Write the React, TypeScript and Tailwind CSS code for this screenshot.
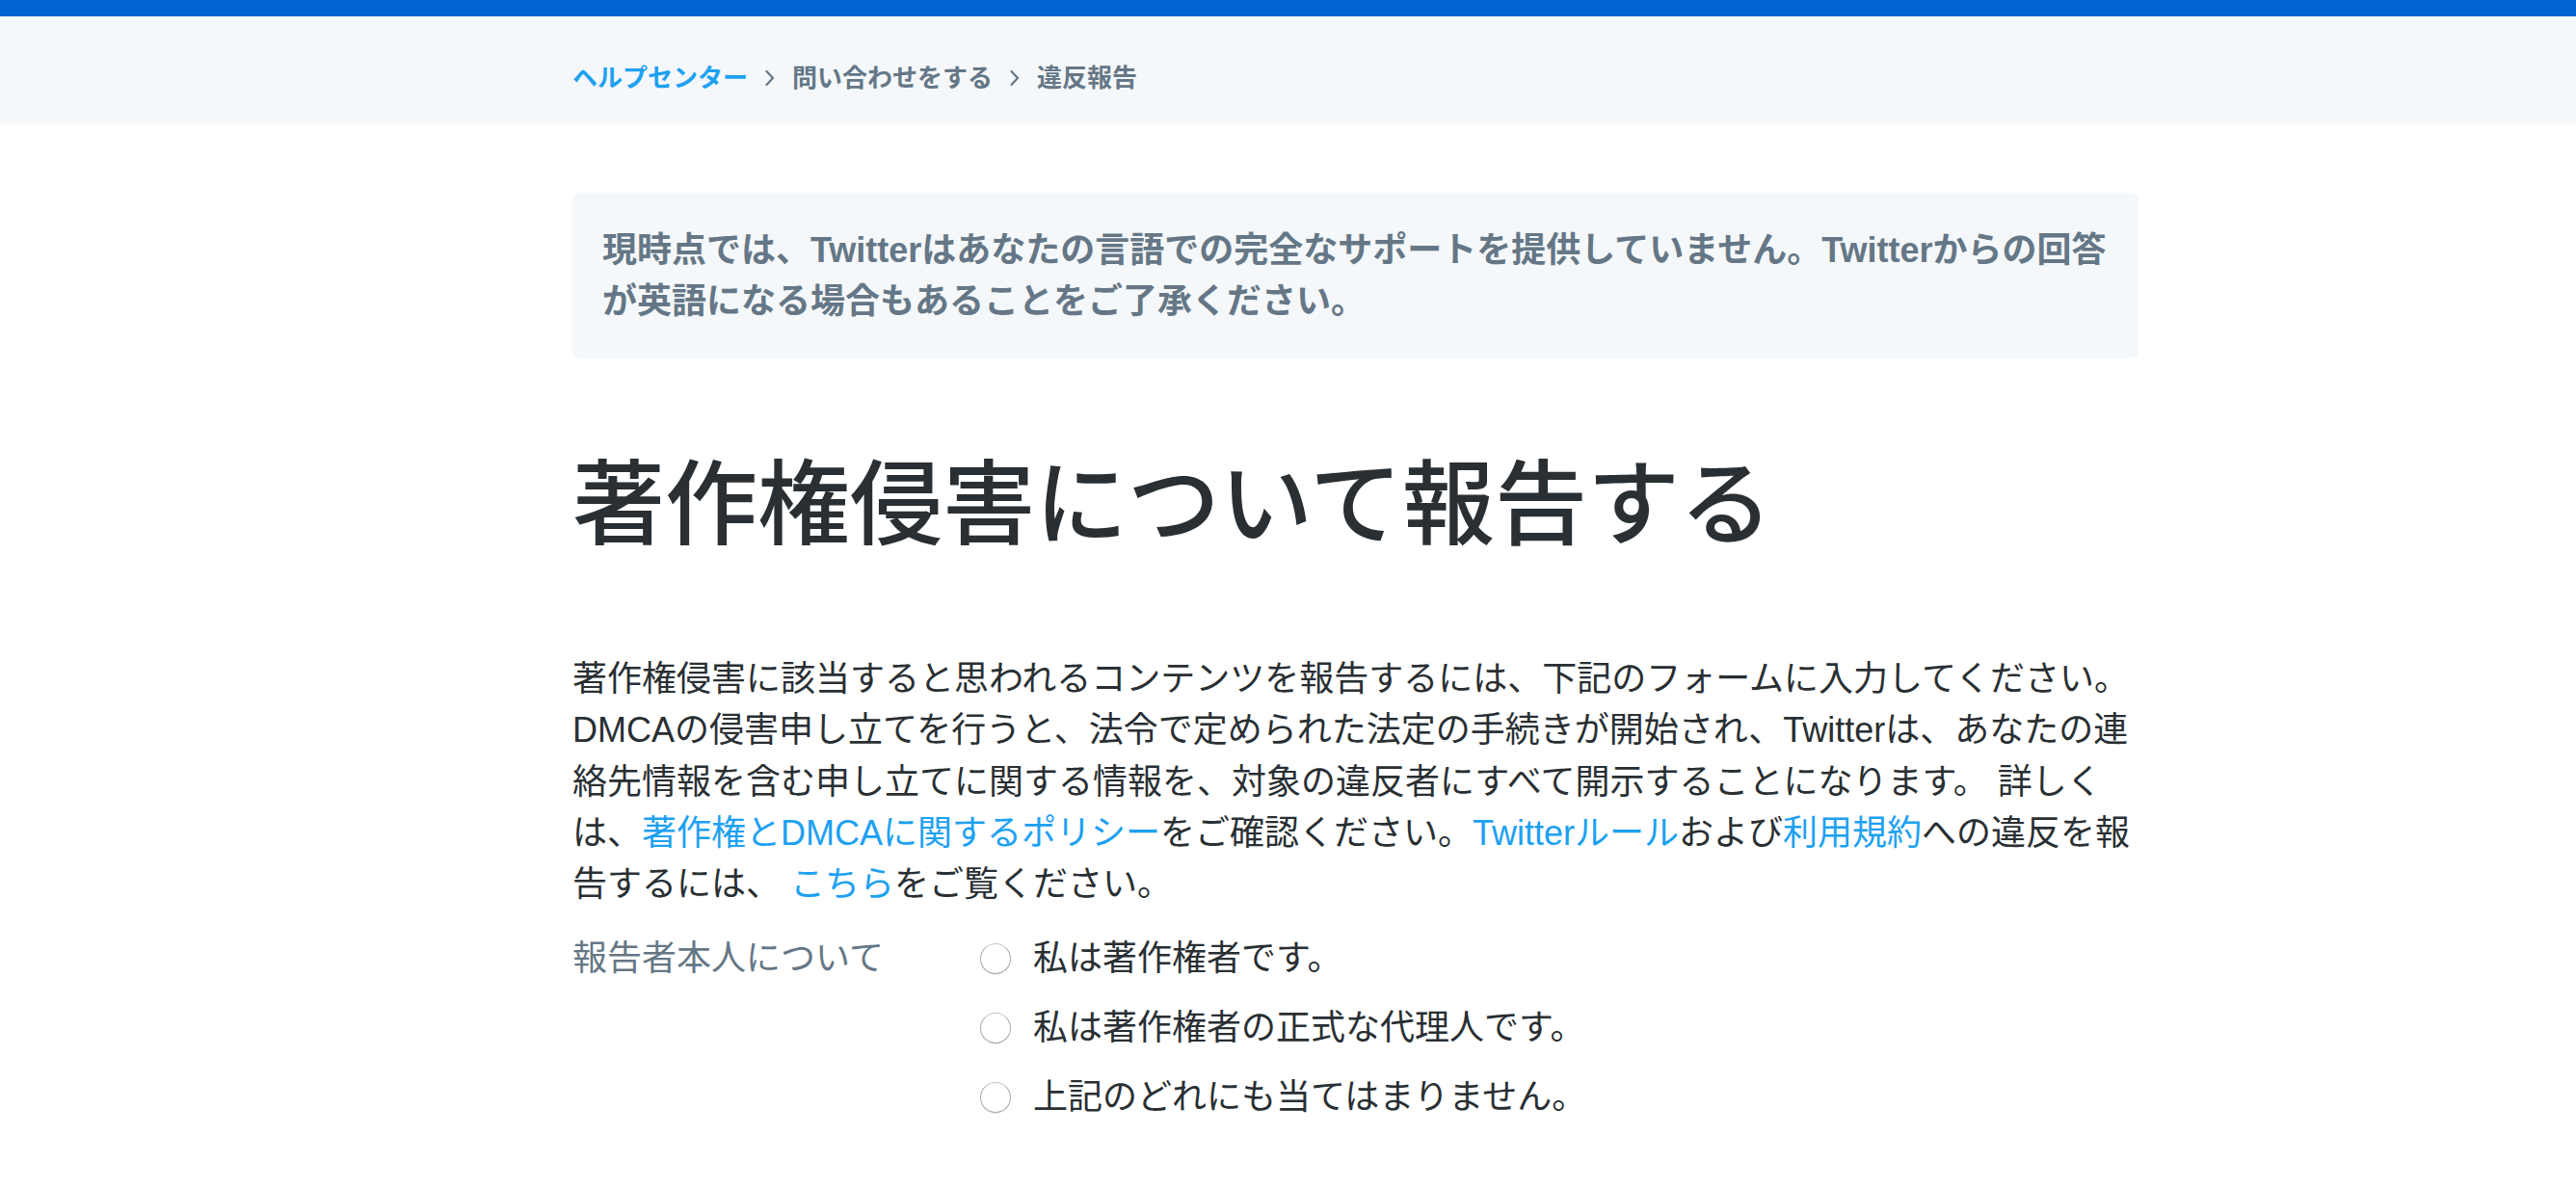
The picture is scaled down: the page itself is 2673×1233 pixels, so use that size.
import React from 'react';

const font = { fontFamily: '"Liberation Sans", "Noto Sans CJK JP", sans-serif' };

function Chevron() {
  return (
    <svg width="12" height="20" viewBox="0 0 12 20" fill="none" className="shrink-0">
      <path d="M2.5 3 L9 10 L2.5 17" stroke="#657786" strokeWidth="2.2" strokeLinecap="round" strokeLinejoin="round" />
    </svg>
  );
}

function Radio({ label }: { label: string }) {
  return (
    <label className="flex items-center gap-[23px] h-[53px]">
      <span className="w-[32px] h-[32px] rounded-full border-[1.5px] border-[#ababab] border-t-[#c4c4c4] bg-white shadow-[0_1px_1px_rgba(0,0,0,0.08)] shrink-0" />
      <span className="text-[36px] leading-[53px] text-[#292f33]">{label}</span>
    </label>
  );
}

export default function App() {
  return (
    <div className="min-h-screen bg-white" style={font}>
      {/* Top bar */}
      <div className="h-[17px] bg-[#0064d2]" />

      {/* Breadcrumb */}
      <nav className="h-[111px] bg-[#f5f8fa] flex items-center pt-[17px]">
        <div className="ml-[594px] flex items-center text-[26px] font-bold">
          <a className="text-[#1da1f2]">ヘルプセンター</a>
          <span className="mx-[17px]"><Chevron /></span>
          <a className="text-[#657786]">問い合わせをする</a>
          <span className="mx-[17px]"><Chevron /></span>
          <span className="text-[#657786]">違反報告</span>
        </div>
      </nav>

      <main className="ml-[594px] w-[1625px]">
        {/* Language notice */}
        <div className="mt-[72px] rounded-lg bg-[#f5f8fa] pl-[31px] pr-[18px] py-[33px]">
          <p className="text-[36px] leading-[53px] font-bold text-[#657786]">
            現時点では、Twitterはあなたの言語での完全なサポートを提供していません。Twitterからの回答が英語になる場合もあることをご了承ください。
          </p>
        </div>

        <h1 className="mt-[94px] text-[96px] leading-[115px] font-medium text-[#292f33]">
          著作権侵害について報告する
        </h1>

        <p className="mt-[97px] text-[36px] leading-[53.3px] text-[#292f33]">
          著作権侵害に該当すると思われるコンテンツを報告するには、下記のフォームに入力してください。DMCAの侵害申し立てを行うと、法令で定められた法定の手続きが開始され、Twitterは、あなたの連絡先情報を含む申し立てに関する情報を、対象の違反者にすべて開示することになります。 詳しくは、
          <a className="text-[#1da1f2]">著作権とDMCAに関するポリシー</a>
          をご確認ください。
          <a className="text-[#1da1f2]">Twitterルール</a>
          および
          <a className="text-[#1da1f2]">利用規約</a>
          への違反を報告するには、 <a className="text-[#1da1f2]">こちら</a>をご覧ください。
        </p>

        {/* Reporter */}
        <div className="mt-[24px] flex">
          <div className="w-[423px] shrink-0 text-[36px] leading-[53px] text-[#657786]">報告者本人について</div>
          <div className="flex flex-col gap-[19px]">
            <Radio label="私は著作権者です。" />
            <Radio label="私は著作権者の正式な代理人です。" />
            <Radio label="上記のどれにも当てはまりません。" />
          </div>
        </div>
      </main>
    </div>
  );
}
